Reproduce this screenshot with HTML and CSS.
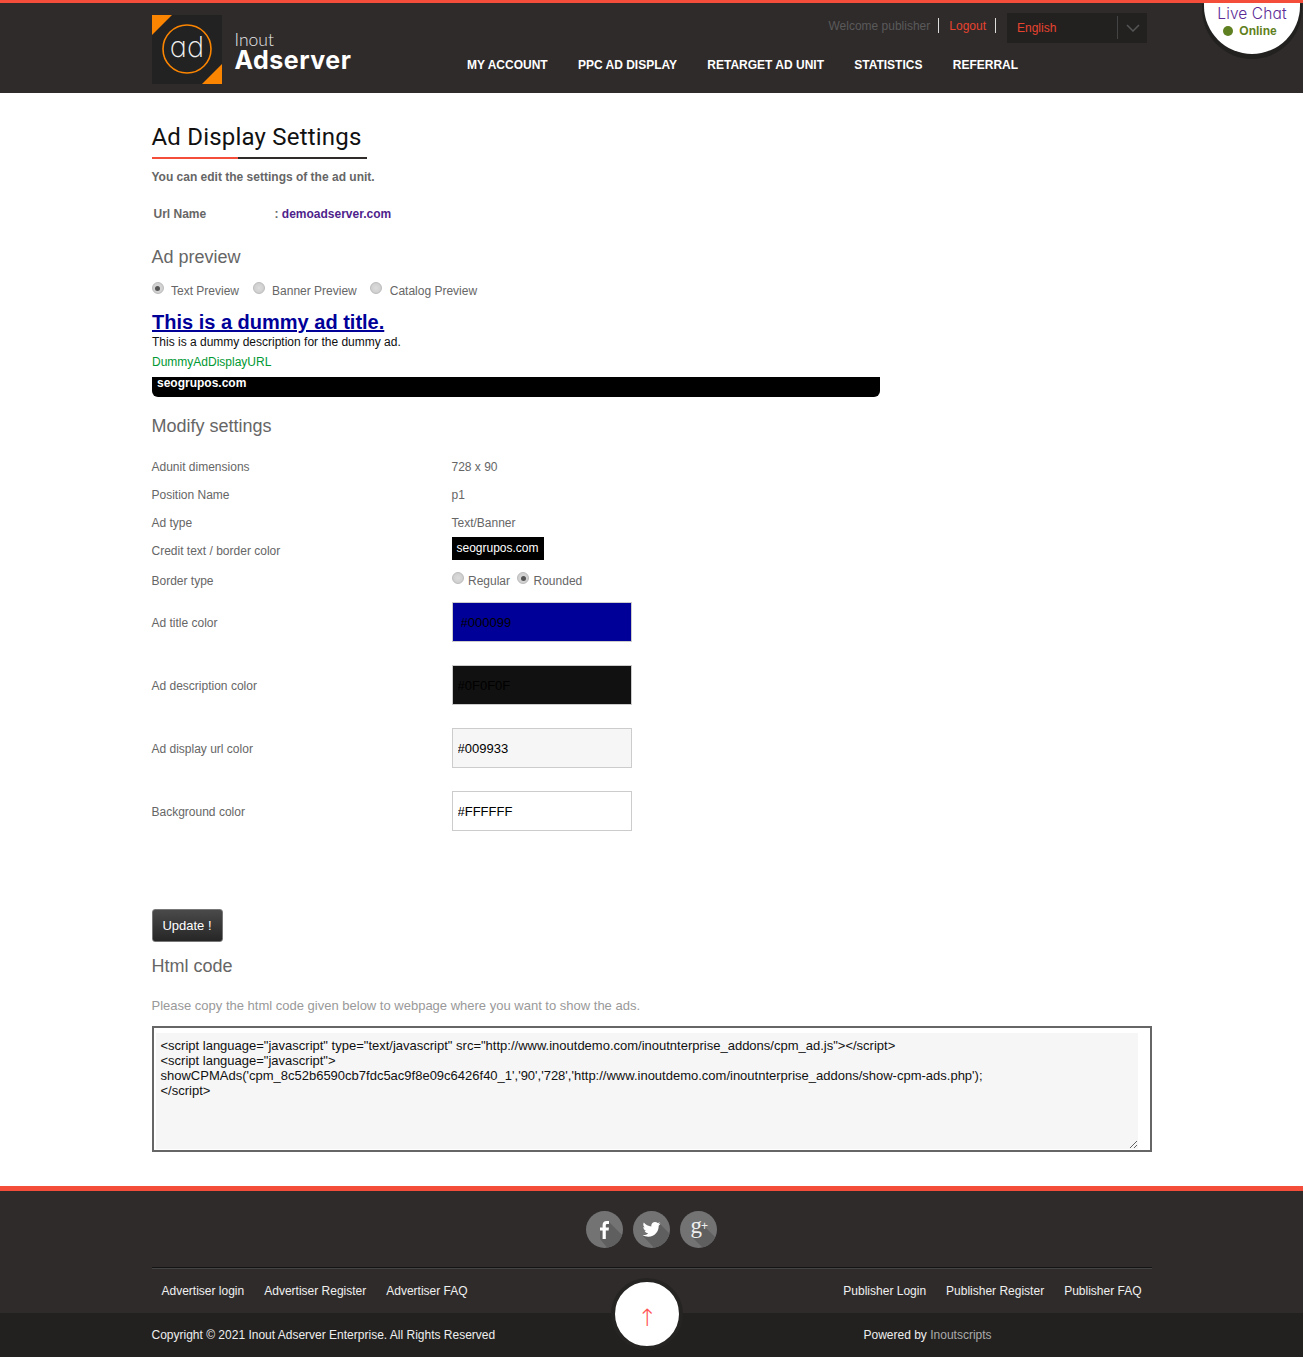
FILE: index.html
```html
<!DOCTYPE html>
<html lang="en">
<head>
<meta charset="utf-8">
<title>Ad Display Settings</title>
<link rel="stylesheet" href="styles.css">
</head>
<body>
<header class="site-header">
  <div class="wrap header-inner">
    <a class="logo" href="#">
      <svg class="logo-mark" width="70" height="69" viewBox="0 0 70 69">
        <rect width="70" height="69" fill="#222222"/>
        <path d="M0 0H20L0 20Z" fill="#fb8500"/>
        <path d="M70 49V69H50Z" fill="#fb8500"/>
        <circle cx="35" cy="34" r="24" fill="none" stroke="#fb8500" stroke-width="1.6"/>
        <text x="35" y="42" class="logo-ad" text-anchor="middle">ad</text>
      </svg>
      <span class="logo-text"><span class="logo-thin">Inout</span><span class="logo-bold">Adserver</span></span>
    </a>
    <div class="header-right">
      <div class="userbar">
        <span class="welcome">Welcome publisher</span>
        <a class="logout" href="#">Logout</a>
        <span class="lang"><span class="lang-name">English</span><span class="lang-caret"><svg width="14" height="8" viewBox="0 0 14 8"><path d="M1 1L7 7L13 1" fill="none" stroke="#555" stroke-width="1.5"/></svg></span></span>
      </div>
      <nav class="main-nav">
        <a href="#">MY ACCOUNT</a>
        <a href="#">PPC AD DISPLAY</a>
        <a href="#">RETARGET AD UNIT</a>
        <a href="#">STATISTICS</a>
        <a href="#">REFERRAL</a>
      </nav>
    </div>
  </div>
</header>
<div class="live-chat">
  <span class="chat-title">Live Chat</span>
  <span class="chat-status"><i class="chat-dot"></i>Online</span>
</div>

<main class="wrap content">
  <h1 class="page-title">Ad Display Settings</h1>
  <p class="intro">You can edit the settings of the ad unit.</p>
  <div class="url-row"><span class="url-label">Url Name</span><span class="url-value">: <a href="#">demoadserver.com</a></span></div>

  <h2 class="section first">Ad preview</h2>
  <div class="preview-options">
    <label><input type="radio" name="preview" class="radio" checked><span>Text Preview</span></label>
    <label><input type="radio" name="preview" class="radio"><span>Banner Preview</span></label>
    <label><input type="radio" name="preview" class="radio"><span>Catalog Preview</span></label>
  </div>
  <div class="ad-preview">
    <a class="ad-title" href="#">This is a dummy ad title.</a>
    <div class="ad-desc">This is a dummy description for the dummy ad.</div>
    <div class="ad-url">DummyAdDisplayURL</div>
    <div class="ad-credit">seogrupos.com</div>
  </div>

  <h2 class="section modify">Modify settings</h2>
  <div class="settings">
    <div class="row"><span>Adunit dimensions</span><span>728 x 90</span></div>
    <div class="row"><span>Position Name</span><span>p1</span></div>
    <div class="row"><span>Ad type</span><span>Text/Banner</span></div>
    <div class="row"><span>Credit text / border color</span><span class="credit-box">seogrupos.com</span></div>
    <div class="row border-row"><span>Border type</span>
      <span class="border-opts">
        <label><input type="radio" name="border" class="radio"><span>Regular</span></label>
        <label><input type="radio" name="border" class="radio" checked><span>Rounded</span></label>
      </span>
    </div>
    <div class="row color-row"><span>Ad title color</span><input class="color-input c-title" value="#000099"></div>
    <div class="row color-row"><span>Ad description color</span><input class="color-input c-desc" value="#0F0F0F"></div>
    <div class="row color-row"><span>Ad display url color</span><input class="color-input c-url" value="#009933"></div>
    <div class="row color-row"><span>Background color</span><input class="color-input c-bg" value="#FFFFFF"></div>
  </div>

  <button class="update-btn" type="button">Update !</button>
  <h2 class="section html-code">Html code</h2>
  <p class="copy-note">Please copy the html code given below to webpage where you want to show the ads.</p>
  <div class="code-box">
<textarea class="code" spellcheck="false">&lt;script language="javascript" type="text/javascript" src="http://www.inoutdemo.com/inoutnterprise_addons/cpm_ad.js"&gt;&lt;/script&gt;
&lt;script language="javascript"&gt;
showCPMAds('cpm_8c52b6590cb7fdc5ac9f8e09c6426f40_1','90','728','http://www.inoutdemo.com/inoutnterprise_addons/show-cpm-ads.php');
&lt;/script&gt;</textarea>
  </div>
</main>

<footer class="site-footer">
  <div class="footer-top">
    <div class="wrap">
      <div class="social">
        <a class="soc" href="#"><svg width="37" height="37" viewBox="0 0 37 37"><defs><clipPath id="disc"><circle cx="18.5" cy="18.5" r="18.5"/></clipPath></defs><circle cx="18.5" cy="18.5" r="18.5" fill="#737373"/><path d="M22 10L40 28V40H24L14 28V19Z" fill="#5f5f5f" clip-path="url(#disc)"/><path d="M19.8 28V19.6H22.6L23 16.4H19.8V14.4C19.8 13.4 20.1 12.9 21.4 12.9H23V10C22.6 10 21.7 9.9 20.6 9.9C18.2 9.9 16.6 11.3 16.6 14V16.4H14V19.6H16.6V28Z" fill="#fff"/></svg></a>
        <a class="soc" href="#"><svg width="37" height="37" viewBox="0 0 37 37"><circle cx="18.5" cy="18.5" r="18.5" fill="#737373"/><path d="M27 13L42 28V42H26L10 25Z" fill="#5f5f5f" clip-path="url(#disc)"/><path d="M27.5 12.6C26.8 12.9 26.1 13.1 25.4 13.2C26.2 12.7 26.7 12 27 11.2C26.3 11.6 25.5 11.9 24.7 12.1C24 11.3 23 10.9 22 10.9C20 10.9 18.3 12.6 18.3 14.6C18.3 14.9 18.3 15.2 18.4 15.4C15.3 15.2 12.6 13.8 10.8 11.5C10.5 12.1 10.3 12.7 10.3 13.4C10.3 14.7 11 15.8 12 16.5C11.4 16.5 10.8 16.3 10.3 16C10.3 17.9 11.6 19.4 13.3 19.7C12.8 19.9 12.2 19.9 11.6 19.8C12.1 21.3 13.5 22.3 15.1 22.4C13.5 23.6 11.6 24.2 9.6 24C11.2 25 13.2 25.7 15.3 25.7C22 25.7 25.7 20.1 25.7 15.2V14.7C26.4 14.2 27 13.5 27.5 12.6Z" fill="#fff"/></svg></a>
        <a class="soc" href="#"><svg width="37" height="37" viewBox="0 0 37 37"><circle cx="18.5" cy="18.5" r="18.5" fill="#737373"/><path d="M22 13L40 31V42H28L12 26Z" fill="#5f5f5f" clip-path="url(#disc)"/><text x="10.5" y="22" class="gplus">g</text><text x="21" y="18.6" class="gplus-sign">+</text></svg></a>
      </div>
      <div class="footer-links">
        <div class="links-group">
          <a href="#">Advertiser login</a><a href="#">Advertiser Register</a><a href="#">Advertiser FAQ</a>
        </div>
        <div class="links-group">
          <a href="#">Publisher Login</a><a href="#">Publisher Register</a><a href="#">Publisher FAQ</a>
        </div>
      </div>
    </div>
  </div>
  <div class="footer-bottom">
    <div class="wrap bottom-inner">
      <span class="copyright">Copyright © 2021 Inout Adserver Enterprise. All Rights Reserved</span>
      <span class="powered">Powered by <a href="#">Inoutscripts</a></span>
    </div>
  </div>
  <a class="to-top" href="#">↑</a>
</footer>
</body>
</html>
```
FILE: styles.css
```css
* { box-sizing: border-box; }
html, body { margin: 0; padding: 0; }
body {
  font-family: "Liberation Sans", Arial, sans-serif;
  font-size: 12px;
  color: #666;
  background: #fff;
  position: relative;
  width: 1303px;
  overflow-x: hidden;
}
a { text-decoration: none; }
.wrap { width: 1000px; margin: 0 auto; }

/* header */
.site-header {
  height: 93px;
  background: #2f2b2b;
  border-top: 3px solid #f44e3b;
}
.header-inner { display: flex; padding-top: 12px; }
.logo { display: flex; width: 315px; align-items: flex-start; }
.logo-mark { display: block; flex: none; }
.logo-ad { font-family: "Inter", sans-serif; font-feature-settings: "cv11"; font-weight: 200; font-size: 29px; fill: #f0f0f0; }
.logo-text { display: flex; flex-direction: column; margin: 16px 0 0 13px; color: #fff; }
.logo-thin { font-family: "Lato", sans-serif; font-weight: 300; font-size: 17.5px; line-height: 18px; color: #e8e8e8; }
.logo-bold { font-family: "Inter", sans-serif; font-weight: 700; font-size: 25px; line-height: 24px; margin-top: -1px; letter-spacing: .5px; }
.header-right { flex: 1; position: relative; }
.userbar { display: flex; justify-content: flex-end; align-items: flex-start; height: 31px; padding-right: 4.5px; }
.welcome { color: #5a5a5a; padding-right: 8px; border-right: 1px solid #ddd; height: 15px; line-height: 16px; margin-top: 3px; }
.logout { color: #e8432f; padding: 0 9px 0 10px; border-right: 1px solid #ddd; height: 15px; line-height: 16px; margin-top: 3px; }
.lang { display: flex; width: 140px; height: 30px; margin-left: 11px; margin-top: -2px; background: #222120; }
.lang-name { flex: 1; color: #e8432f; padding: 8px 0 0 10px; line-height: 14px; }
.lang-caret { width: 30px; margin: 3px 0 4px; border-left: 1px solid #444; display: flex; align-items: center; justify-content: center; }
.main-nav { display: flex; gap: 30.25px; padding: 12px 0 0 .5px; }
.main-nav a { color: #fff; font-weight: 700; line-height: 14px; }

/* live chat */
.live-chat {
  position: absolute;
  top: 3px;
  left: 1204px;
  width: 96px;
  height: 51px;
  background: #fff;
  border-radius: 0 0 48px 48px / 0 0 48px 48px;
  box-shadow: 0 3px 0 2px #222120;
  text-align: center;
}
.chat-title { display: block; font-family: "Inter", sans-serif; font-feature-settings: "cv11"; font-weight: 300; font-size: 15.5px; letter-spacing: .1px; line-height: 21px; color: #5b2a96; }
.chat-status { display: flex; justify-content: center; align-items: center; font-weight: 700; color: #5f8020; line-height: 14px; padding-right: 4px; }
.chat-dot { width: 10px; height: 10px; border-radius: 50%; background: #5f8020; margin-right: 6px; }

/* content */
.content { height: 1093px; padding-top: 29px; }
.page-title {
  display: inline-block;
  margin: 0;
  width: 215px;
  height: 37px;
  font-family: "Roboto", sans-serif;
  font-size: 24px;
  font-weight: 400;
  letter-spacing: .2px;
  line-height: 30px;
  color: #111;
  border-bottom: 2px solid #2f2b2b;
  position: relative;
}
.page-title::after {
  content: "";
  position: absolute;
  left: 0;
  bottom: -2px;
  width: 86px;
  height: 2px;
  background: #f44e3b;
}
.intro { margin: 11px 0 0; font-weight: 700; line-height: 14px; }
.url-row { display: flex; padding: 23px 0 0 2px; font-weight: 700; line-height: 14px; }
.url-label { width: 121px; }
.url-value a { color: #4f1f8c; }
.section { margin: 0; font-size: 18px; font-weight: 400; color: #666; line-height: 20px; }
.section.first { margin-top: 26px; }
.preview-options { display: flex; gap: 13.5px; margin-top: 14px; height: 20px; }
.preview-options label, .border-opts label { display: flex; align-items: flex-start; }
.preview-options label span { margin: 3px 0 0 7.5px; line-height: 14px; }
.preview-options .radio { margin-top: 1px; }
.radio {
  appearance: none;
  -webkit-appearance: none;
  width: 12px;
  height: 12px;
  margin: 0;
  border-radius: 50%;
  border: 1px solid #bbb;
  background: radial-gradient(circle, #dcdcdc 0, #cfcfcf 70%, #bdbdbd 100%);
  position: relative;
  flex: none;
}
.radio:checked::after {
  content: "";
  position: absolute;
  left: 2.5px;
  top: 2.5px;
  width: 5px;
  height: 5px;
  border-radius: 50%;
  background: #555;
}
.ad-preview { width: 728.5px; margin-top: 10px; padding-left: .5px; }
.ad-title { display: block; font-size: 20px; font-weight: 700; color: #000099; text-decoration: underline; line-height: 23px; }
.ad-desc { color: #0f0f0f; line-height: 14px; margin-top: 1px; }
.ad-url { color: #009933; line-height: 14px; margin-top: 6px; }
.ad-credit {
  height: 20px;
  margin-top: 8px;
  padding-left: 5px;
  background: #000;
  color: #fff;
  font-weight: 700;
  line-height: 13px;
  border-radius: 0 0 6px 6px;
}
.section.modify { margin-top: 19px; }
.settings { margin-top: 17px; }
.row { display: flex; align-items: center; height: 28px; }
.row > span:first-child { width: 300px; flex: none; }
.credit-box {
  background: #000;
  color: #fff;
  height: 23px;
  line-height: 23px;
  padding: 0 5px;
  margin-top: -6px;
}
.row.border-row { height: 32px; }
.border-opts { display: flex; gap: 7px; margin-bottom: 2px; }
.border-opts label span { margin: 2px 0 0 4.5px; line-height: 14px; }
.row.color-row { height: 40px; margin-bottom: 23px; }
.row.color-row > span:first-child { margin-top: 2px; }
.border-row + .color-row { margin-top: 5px; }
.color-input {
  width: 180px;
  height: 40px;
  padding: 0 5px;
  border: 1px solid #ccc;
  font-family: "Liberation Sans", Arial, sans-serif;
  font-size: 13px;
  color: #000;
  outline: 0;
}
.color-input.c-title { background: #000099; padding-left: 8px; }
.c-desc { background: #111; }
.c-url { background: #f6f6f6; }
.c-bg { background: #fff; }
.update-btn {
  display: block;
  width: 71px;
  height: 33px;
  margin-top: 78px;
  padding: 0;
  border: 1px solid #777;
  border-radius: 3px;
  background: linear-gradient(#4a4a4a, #262626);
  color: #fff;
  font-family: "Liberation Sans", Arial, sans-serif;
  font-size: 13px;
}
.section.html-code { margin-top: 14px; }
.copy-note { margin: 22px 0 0; font-size: 13px; line-height: 15px; color: #999; }
.code-box {
  height: 126px;
  margin-top: 13px;
  padding: 5px 12px 1px 2px;
  border: 2px solid #666;
}
.code {
  display: block;
  width: 100%;
  height: 116px;
  padding: 5px;
  border: 0;
  outline: 0;
  background: #f6f6f6;
  color: #111;
  font-family: "Liberation Sans", Arial, sans-serif;
  font-size: 13px;
  line-height: 15px;
}

/* footer */
.site-footer { position: relative; height: 171px; background: #2f2b2b; border-top: 5px solid #f44e3b; }
.footer-top { height: 122px; padding-top: 20px; }
.social { display: flex; justify-content: center; gap: 10px; height: 37px; }
.soc { display: block; width: 37px; height: 37px; }
.soc svg { display: block; }
.gplus { font-family: "Liberation Serif", serif; font-size: 23px; fill: #eee; }
.gplus-sign { font-family: "Liberation Sans", sans-serif; font-size: 12px; fill: #eee; }
.footer-links {
  display: flex;
  justify-content: space-between;
  margin-top: 19px;
  border-top: 1px solid #151313;
  box-shadow: inset 0 1px 0 #444;
  padding: 16px 10px 0;
}
.links-group { display: flex; gap: 20px; }
.links-group a { color: #f0f0f0; line-height: 14px; }
.footer-bottom { height: 44px; background: #222120; }
.bottom-inner { display: flex; padding-top: 15px; line-height: 14px; color: #eee; }
.copyright { width: 712px; }
.powered a { color: #aaa; }
.to-top {
  position: absolute;
  left: 611px;
  top: 87px;
  width: 72px;
  height: 72px;
  border: 4px solid #262423;
  border-radius: 50%;
  background: #fff;
  color: #f55;
  font-family: "DejaVu Sans", sans-serif;
  font-weight: 200;
  font-size: 24px;
  line-height: 72px;
  text-align: center;
}
```
